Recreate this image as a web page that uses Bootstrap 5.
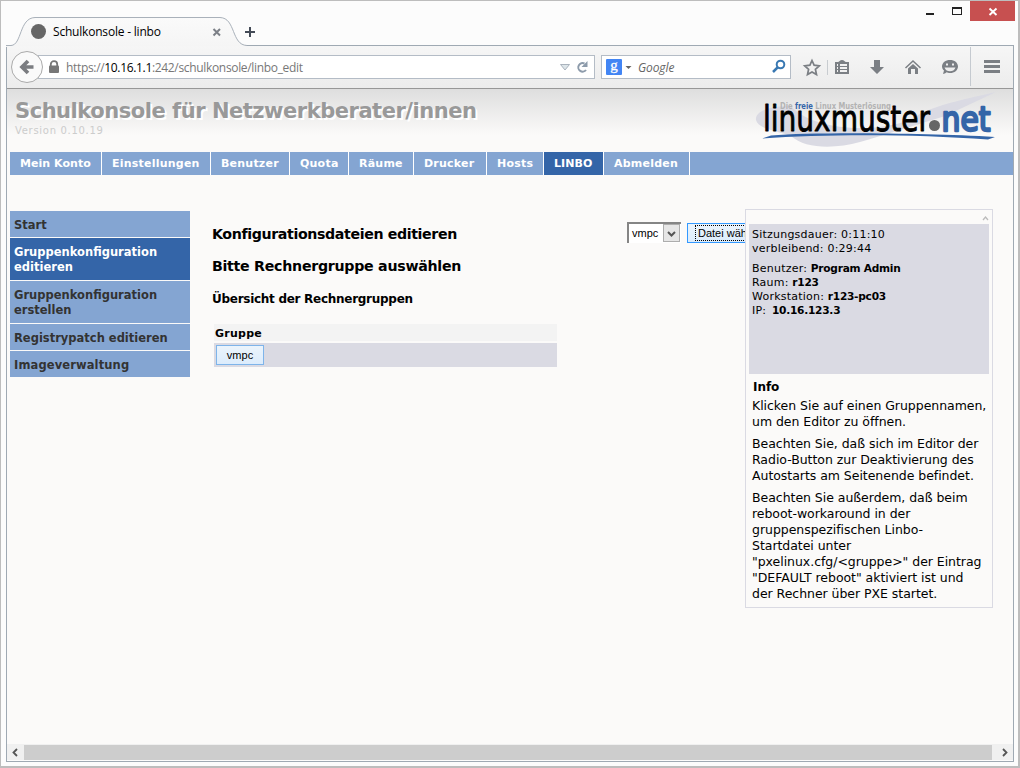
<!DOCTYPE html>
<html lang="de">
<head>
<meta charset="utf-8">
<meta name="viewport" content="width=device-width, initial-scale=1">
<title>Schulkonsole - linbo</title>
<link href="https://cdn.jsdelivr.net/npm/bootstrap@5.3.0/dist/css/bootstrap.min.css" rel="stylesheet">
<style>
body{font-family:"DejaVu Sans",sans-serif;font-size:11px;line-height:14px;color:#000}
.win{width:1020px;height:768px;background:#fcfcfc;border:1px solid #bdbdbd;border-right-width:2px;border-bottom-width:2px}
.titlebar{height:44px;font:12px/15px "Open Sans",sans-serif}
.tab-bg{left:0;top:0}
.tab-label{left:52px;top:23px;letter-spacing:-.2px}
.controls{right:3px;top:0}
.frame{margin:0 4px 0 5px;height:717px;border:1px solid #9fa9b3}
.toolbar{height:43px;background:linear-gradient(#f6f6f6,#ececec);border-bottom:1px solid #979797;font:12px/20px "Open Sans",sans-serif;padding:9px 0 0 31px}
.field{height:24px;background:#fff;border:1px solid #b4bcc6}
.url{width:557px;color:#777;padding-left:8px}
.url-text{letter-spacing:-.33px;padding-top:2px}
.search{width:190px;margin-left:6px;padding-left:4px}
.search i{letter-spacing:-.1px;color:#666;padding:2px 3px 0 0}
.back{left:4px;top:5px}
.tools{left:790px;top:0}
.page-area{height:655px;background:#fbfaf9;overflow:hidden}
.masthead{height:63px;background:linear-gradient(#dedede,#fbfaf9 46px);padding:9px 0 0 8px}
.masthead h1{font-size:21px;line-height:27px;font-weight:bold;color:#999;text-shadow:2px 2px 0 #fff;letter-spacing:-.47px;white-space:nowrap}
.version{color:#ccc;font-size:10px;line-height:12px;letter-spacing:.7px}
.logo{right:16px;top:0}
.mainnav{display:grid;grid-template-columns:92px 109px 79px 59px 65px 73px 57px 60px 86px 1fr;height:23px;margin-left:3px;background:#84a5d2;font-weight:bold;line-height:23px;letter-spacing:.22px}
.mainnav a{color:#fff;text-decoration:none;padding-left:10px;border-right:1px solid #fff;white-space:nowrap}
.mainnav a:first-child{letter-spacing:.05px}
.mainnav a.on,.side a.on{background:#3465a8;color:#fff}
.mainnav a.on{letter-spacing:.05px}
.side{width:180px;margin:36px 0 0 3px;font-weight:bold;font-size:11.5px;line-height:15px}
.side a{display:block;background:#84a5d2;color:#333;text-decoration:none;padding:7px 4px 4px;margin-bottom:1px}
.side a.on{padding:7px 4px 5px}
.side a.two{padding-bottom:5px}
.side a:last-child{letter-spacing:.12px}
.main{width:345px;margin:49px 0 0 22px}
.main h2{font-size:14.2px;line-height:20px;font-weight:bold;margin:0 0 12px;white-space:nowrap;letter-spacing:-.38px}
.main h2+h2{letter-spacing:-.28px}
.main h3{font-size:12px;line-height:16px;font-weight:bold;margin:15px 0 17px;white-space:nowrap;letter-spacing:-.28px}
.hd{background:#f3f3f3;height:17px;line-height:19px;padding-left:1px;font-weight:bold;margin-left:2px;letter-spacing:.25px}
.rw{background:#dadae3;height:24px;margin:2px 0 0 2px;padding:2px}
.winbtn{font:11px/13px "Liberation Sans",sans-serif;color:#000;background:linear-gradient(#ebf4fc,#dcecfc);border:1px solid #7eb4ea;border-radius:0;padding:0}
.rw .winbtn{width:48px;height:20px;display:block}
.upload{width:118px;margin:47px 0 0 70px;height:22px;overflow:hidden;font:11px/14px "Liberation Sans",sans-serif}
.pick{width:54px;height:21px;background:#fff;border:2px solid #858585;border-right:0;border-bottom:0;padding:2px 0 0 3px;position:relative}
.pick svg{position:absolute;right:1px;top:0}
.upload .winbtn{flex:none;width:80px;height:20px;margin:1px 0 0 6px;border-color:#3399ff;text-align:left;padding:0 0 0 7px;white-space:nowrap}
.upload .winbtn span{display:block;border:1px dotted #000;padding-left:2px;height:16px;line-height:14px}
.panel{width:248px;height:399px;margin-top:34px;border:1px solid #dadae3;padding:0 3px;position:relative;background:#fbfaf9}
.session{height:150px;margin-top:14px;background:#dadae3;padding:4px 3px;letter-spacing:.22px}
.session b{font-size:10.6px;line-height:10px;letter-spacing:-.25px}
.session b.addr{letter-spacing:-.25px;margin-left:2px}
.session p{margin:0 0 6px}
.info{padding:6px 0 0 3px;font-size:12.5px;line-height:16px;letter-spacing:-.04px;white-space:nowrap}
.info p{margin:0 0 6px}
.info h4{font-size:12px;line-height:14px;font-weight:bold;margin:0 0 4px 1px}
.hscroll{height:16px;background:#f0f0f0;padding:1px 21px 0 17px;position:relative}
.hscroll i{display:block;height:15px;background:#cdcdcd}
.hscroll svg{position:absolute;top:4px}
</style>
</head>
<body>
<div class="win overflow-hidden">
  <div class="titlebar position-relative">
    <svg class="tab-bg position-absolute" width="262" height="46" fill="none">
      <defs><linearGradient id="tg" x1="0" y1="0" x2="0" y2="1"><stop offset="0" stop-color="#fafafa"/><stop offset="1" stop-color="#f5f5f5"/></linearGradient></defs>
      <path d="M5 46V44.500H10C21 44 18 17 34 16.500H219C235 17 230 44 246 44.500V46Z" fill="url(#tg)"/>
      <path d="M5 44.500H10C21 44 18 17 34 16.500H219C235 17 230 44 246 44.500" stroke="#a9b1ba"/>
      <circle cx="37.500" cy="30.500" r="7.500" fill="#666"/>
      <path d="M212.500 28l6.500 6.500m0-6.500l-6.500 6.500" stroke="#7c8087" stroke-width="2"/>
      <path d="M244 31h10m-5-5v10" stroke="#444b57" stroke-width="2"/>
    </svg>
    <span class="tab-label position-absolute">Schulkonsole - linbo</span>
    <svg class="controls position-absolute" width="90" height="20" shape-rendering="crispEdges">
      <path d="M1 12h8v2H1z" fill="#222"/><path d="M27 6h10v8H27zM28 8v5h8V8z" fill="#222" fill-rule="evenodd"/>
      <path d="M45 0h45v20H45z" fill="#c75050"/><path d="M64.500 7.500l7 6.500m0-6.500l-7 6.500" stroke="#fff" stroke-width="1.900" shape-rendering="auto"/>
    </svg>
  </div>
  <div class="frame">
    <div class="toolbar d-flex position-relative">
      <div class="field url d-flex align-items-center">
        <svg class="me-1" width="15" height="16"><path d="M3.800 8V5.300a3.200 3.200 0 0 1 6.400 0V8" stroke="#777" stroke-width="1.800" fill="none"/><rect x="2" y="6.500" width="10" height="7.500" rx="1" fill="#777"/></svg>
        <span class="url-text">https://<span class="text-black">10.16.1.1</span>:242/schulkonsole/linbo_edit</span>
        <svg class="ms-auto" width="36" height="18"><path d="M2.500 6.500h9L7 12z" fill="#dde5e9" stroke="#aab3bd"/><path d="M26.500 5.500A4.300 4.300 0 1 0 28 12" stroke="#8d9bab" stroke-width="2" fill="none"/><path d="M29.500 3v6h-6z" fill="#8d9bab"/></svg>
      </div>
      <div class="field search d-flex align-items-center">
        <svg width="32" height="16"><rect width="16" height="16" rx="1" fill="#4285f4"/><text x="4.300" y="11" font-family="Liberation Serif,serif" font-size="15" fill="#fff" stroke="#fff" stroke-width=".3">g</text><path d="M19.500 7h6l-3 3z" fill="#666"/></svg>
        <i>Google</i>
        <svg class="ms-auto me-1" width="15" height="16"><circle cx="9.500" cy="5.500" r="3.800" fill="none" stroke="#3978b2" stroke-width="2"/><path d="M6.500 8.500L2 13" stroke="#3978b2" stroke-width="2.500"/></svg>
      </div>
      <svg class="back position-absolute" width="34" height="34"><circle cx="16" cy="16" r="15.500" fill="#fafafa" stroke="#aaa"/><path d="M17 10l-6 6 6 6M11.500 16h11" stroke="#7b7d81" stroke-width="3.700" fill="none"/></svg>
      <svg class="tools position-absolute" width="215" height="42" fill="#7b7f84">
        <path d="M15 14.500l2.100 4.700 5.200.6-3.900 3.500 1.100 5.200-4.500-2.600-4.500 2.600 1.100-5.200-3.900-3.500 5.200-.6z" fill="none" stroke="#7b7f84" stroke-width="1.700"/>
        <path d="M30 14h1v15h-1z" fill="#c8ccd0"/>
        <path d="M38 16h3c1 0 2-2 4-2s3 2 4 2h3v12H38zM40 18v2h1v-2zm3 0v2h7v-2zm-3 3v2h1v-2zm3 0v2h7v-2zm-3 3v2h1v-2zm3 0v2h7v-2z" fill-rule="evenodd"/>
        <path d="M77 14h6v7h4l-7 7-7-7h4z"/>
        <path d="M111 22.500l5-4.500 5 4.500V28h-3v-5h-4v5h-3z"/><path d="M108.500 22l7.500-7 7.500 7" fill="none" stroke="#7b7f84" stroke-width="1.500"/>
        <path d="M153 14c4.500 0 8 2.700 8 6.500s-3.500 6.500-8 6.500c-1.500 0-2.500-.3-3.500-.7-1 1-2.500 1.700-3.500 1.700l1-3.500c-1.200-1-2-2.500-2-4 0-3.800 3.500-6.500 8-6.500z"/><path d="M149 17.500h2v2h-2zm6 0h2v2h-2zM147.500 21.500h11c-1 3-3 3.700-5.500 3.700s-4.500-.7-5.500-3.700z" fill="#eee"/>
        <path d="M173 1h1v39h-1z" fill="#c5cad0"/>
        <path d="M187 14h16v3h-16zm0 5h16v3h-16zm0 5h16v3h-16z"/>
      </svg>
    </div>
    <div class="page-area">
      <header class="masthead position-relative">
        <h1 class="m-0">Schulkonsole für Netzwerkberater/innen</h1>
        <div class="version">Version 0.10.19</div>
        <svg class="logo position-absolute" width="242" height="63">
          <path d="M36 17C10 17 0 24 1 31C3 40 22 42 36 47C50 60 80 60 105 53C150 40 160 36 190 27L241 3C210 10 190 14 166 24C140 45 60 45 36 17Z" fill="#dadae3"/>
          <text x="8" y="42" font-family="DejaVu Sans,sans-serif" font-size="36" stroke="#000" stroke-width=".9" stroke-linejoin="round" textLength="167" lengthAdjust="spacingAndGlyphs">linuxmuster</text>
          <text x="25" y="20" font-family="DejaVu Sans Condensed,sans-serif" font-size="8" font-weight="bold" fill="#b3b3b3" textLength="111" lengthAdjust="spacingAndGlyphs">Die <tspan fill="#3465a8">freie</tspan> Linux Musterlösung</text>
          <circle cx="179.500" cy="36.500" r="5.500" fill="#666"/>
          <text x="186.500" y="41.500" font-family="DejaVu Sans,sans-serif" font-size="34" fill="#3465a8" stroke="#3465a8" stroke-width="2.400" stroke-linejoin="round" textLength="49" lengthAdjust="spacingAndGlyphs">net</text>
          <path d="M7 49.500l9-3C60 43 170 44 240 48l-7 2.500C160 45 70 45 7 49.500z" fill="#3465a8"/>
        </svg>
      </header>
      <nav class="mainnav"><a href="#">Mein Konto</a><a href="#">Einstellungen</a><a href="#">Benutzer</a><a href="#">Quota</a><a href="#">Räume</a><a href="#">Drucker</a><a href="#">Hosts</a><a href="#" class="on">LINBO</a><a href="#">Abmelden</a></nav>
      <div class="d-flex align-items-start">
        <nav class="side flex-shrink-0"><a href="#">Start</a><a href="#" class="on">Gruppenkonfiguration<br>editieren</a><a href="#" class="two">Gruppenkonfiguration<br>erstellen</a><a href="#">Registrypatch editieren</a><a href="#">Imageverwaltung</a></nav>
        <main class="main flex-shrink-0">
          <h2>Konfigurationsdateien editieren</h2>
          <h2>Bitte Rechnergruppe auswählen</h2>
          <h3>Übersicht der Rechnergruppen</h3>
          <div class="hd">Gruppe</div>
          <div class="rw"><button class="winbtn">vmpc</button></div>
        </main>
        <div class="upload d-flex flex-shrink-0">
          <div class="pick flex-shrink-0">vmpc<svg width="17" height="18"><rect x=".5" y=".5" width="16" height="17" fill="#e6e6e6" stroke="#adadad"/><path d="M5 8l3.500 3.500L12 8" fill="none" stroke="#555" stroke-width="2"/></svg></div>
          <button class="winbtn"><span>Datei wählen</span></button>
        </div>
        <aside class="panel flex-shrink-0">
          <svg class="position-absolute" style="right:3px;top:5px" width="7" height="6"><path d="M1 5l2.500-3L6 5" fill="none" stroke="#bbb" stroke-width="1.300"/></svg>
          <div class="session"><p>Sitzungsdauer: 0:11:10<br>verbleibend: 0:29:44</p><p>Benutzer: <b>Program Admin</b><br>Raum: <b>r123</b><br>Workstation: <b>r123-pc03</b><br>IP: <b class="addr">10.16.123.3</b></p></div>
          <div class="info">
            <h4>Info</h4>
            <p>Klicken Sie auf einen Gruppennamen,<br>um den Editor zu öffnen.</p>
            <p>Beachten Sie, daß sich im Editor der<br>Radio-Button zur Deaktivierung des<br>Autostarts am Seitenende befindet.</p>
            <p>Beachten Sie außerdem, daß beim<br>reboot-workaround in der<br>gruppenspezifischen Linbo-<br>Startdatei unter<br>"pxelinux.cfg/&lt;gruppe&gt;" der Eintrag<br>"DEFAULT reboot" aktiviert ist und<br>der Rechner über PXE startet.</p>
          </div>
        </aside>
      </div>
    </div>
    <div class="hscroll"><svg style="left:4px" width="8" height="9"><path d="M6 1L2.500 4.500 6 8" fill="none" stroke="#555" stroke-width="1.800"/></svg><i></i><svg style="right:4px" width="8" height="9"><path d="M2 1l3.500 3.500L2 8" fill="none" stroke="#555" stroke-width="1.800"/></svg></div>
  </div>
</div>
<script src="https://cdn.jsdelivr.net/npm/bootstrap@5.3.0/dist/js/bootstrap.bundle.min.js"></script>
</body>
</html>
